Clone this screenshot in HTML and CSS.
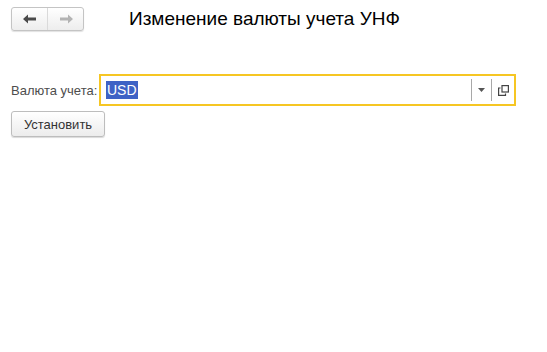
FILE: index.html
```html
<!DOCTYPE html>
<html lang="ru">
<head>
  <meta charset="UTF-8">
  <title>Изменение валюты учета УНФ</title>
  <link rel="stylesheet" href="styles.css">
</head>
<body>
  <header class="topBar">
    <div class="navGroup">
      <button class="navBtn">
        <svg width="14" height="10" viewBox="0 0 14 10"><path d="M0 5 L5 0.5 L5 3.5 L13 3.5 L13 6.5 L5 6.5 L5 9.5 Z" fill="#4a4a4a"/></svg>
      </button>
      <button class="navBtn">
        <svg width="14" height="10" viewBox="0 0 14 10"><path d="M14 5 L9 0.5 L9 3.5 L1 3.5 L1 6.5 L9 6.5 L9 9.5 Z" fill="#b3b3b3"/></svg>
      </button>
    </div>
    <h1 class="pageTitle">Изменение валюты учета УНФ</h1>
  </header>

  <section class="formRow">
    <label class="fieldLabel" for="currency">Валюта учета:</label>
    <div class="inputBox">
      <span class="inputValue"><span class="selected">USD</span></span>
      <span class="inputBtn">
        <svg width="7" height="4" viewBox="0 0 7 4"><path d="M0 0 L7 0 L3.5 4 Z" fill="#555"/></svg>
      </span>
      <span class="inputBtn lastBtn">
        <svg width="11" height="11" viewBox="0 0 11 11" fill="none" stroke="#444" stroke-width="1.2">
          <rect x="4" y="0.6" width="6.4" height="6.4"/>
          <path d="M2.5 3 L0.6 3 L0.6 10.4 L7.5 10.4 L7.5 8.5"/>
        </svg>
      </span>
    </div>
  </section>

  <section class="actions">
    <button class="plainBtn">Установить</button>
  </section>
</body>
</html>
```

FILE: styles.css
```css
body {
  margin: 0;
  padding: 7px 11px;
  font-family: Arial, "Liberation Sans", sans-serif;
  background: #fff;
  color: #333;
}

.topBar {
  display: flex;
  align-items: center;
  height: 24px;
}

.navGroup {
  display: flex;
  width: 73px;
  height: 24px;
  box-sizing: border-box;
  border: 1px solid #c4c4c4;
  border-radius: 3px;
  background: linear-gradient(#ffffff, #ededed);
  box-shadow: 0 1px 1px rgba(0, 0, 0, 0.12);
}

.navBtn {
  flex: 1;
  border: 0;
  padding: 0;
  background: transparent;
  display: flex;
  align-items: center;
  justify-content: center;
}

.navBtn + .navBtn {
  border-left: 1px solid #dadada;
}

.pageTitle {
  margin: 0 0 0 45px;
  font-size: 19px;
  font-weight: normal;
  color: #000;
}

.formRow {
  display: flex;
  align-items: center;
  margin-top: 43px;
}

.fieldLabel {
  font-size: 13px;
  color: #4d4d4d;
  width: 88px;
}

.inputBox {
  display: flex;
  align-items: center;
  width: 417px;
  height: 32px;
  box-sizing: border-box;
  border: 2px solid #f6c623;
  background: #fff;
}

.inputValue {
  flex: 1;
  padding-left: 5px;
  font-size: 14px;
}

.selected {
  background: #3e62c5;
  color: #fff;
  padding: 1px 1px;
}

.inputBtn {
  width: 19px;
  height: 22px;
  border-left: 1px solid #a8a8a8;
  display: flex;
  align-items: center;
  justify-content: center;
}

.lastBtn {
  width: 22px;
}

.actions {
  margin-top: 5px;
}

.plainBtn {
  width: 94px;
  height: 26px;
  border: 1px solid #bdbdbd;
  border-radius: 3px;
  background: linear-gradient(#ffffff, #ececec);
  box-shadow: 0 1px 1px rgba(0, 0, 0, 0.15);
  font-family: Arial, "Liberation Sans", sans-serif;
  font-size: 13px;
  color: #333;
  padding: 0;
}
```
